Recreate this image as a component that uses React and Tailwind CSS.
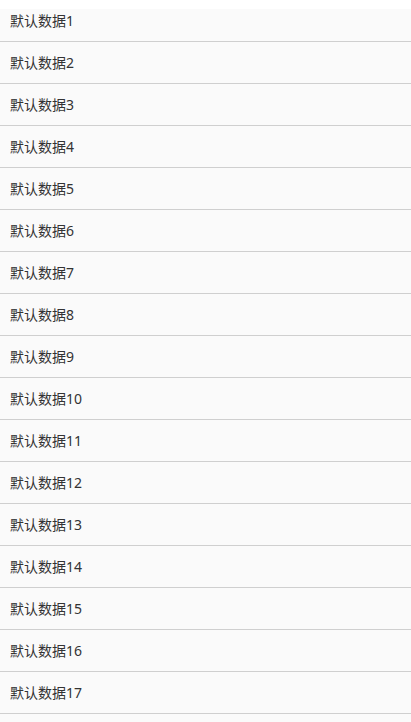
import React from "react";

export default function App() {
  const items = Array.from({ length: 17 }, (_, i) => `默认数据${i + 1}`);
  return (
    <div className="relative h-[722px] overflow-hidden bg-[#fafafa]" style={{ fontFamily: '"Noto Sans", "Noto Sans CJK SC", sans-serif' }}>
      <div className="absolute left-0 right-0 top-0 z-10 h-[9px] bg-white" />
      <ul>
        {items.map((t) => (
          <li key={t} className="flex h-[42px] items-center border-b border-[#cfcfcf] pl-[10px] text-[14px] text-[#333]">
            {t}
          </li>
        ))}
      </ul>
    </div>
  );
}
